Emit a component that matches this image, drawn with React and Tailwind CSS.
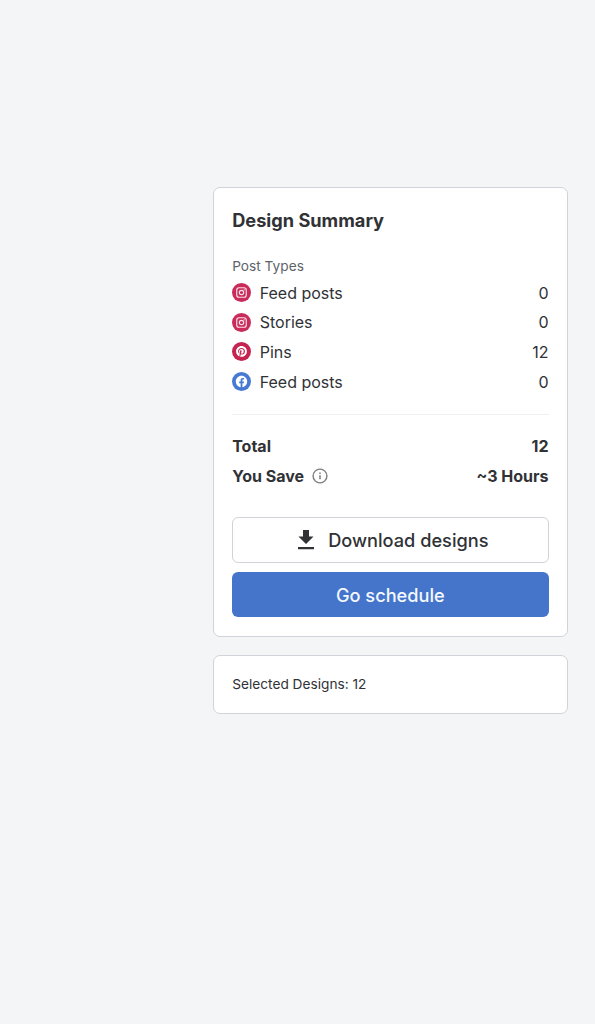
import React from 'react';

function InstagramBadge() {
  return (
    <svg viewBox="0 0 20 20" className="size-[19px] shrink-0">
      <circle cx="10" cy="10" r="10" fill="#c92b5b" />
      <g fill="none" stroke="#fbe4ec" strokeWidth="1.2">
        <rect x="5" y="5" width="10" height="10" rx="2.4" />
        <circle cx="10" cy="10" r="2.3" />
      </g>
      <circle cx="12.8" cy="7.2" r="0.7" fill="#fbe4ec" />
    </svg>
  );
}

function PinterestBadge() {
  return (
    <svg viewBox="0 0 20 20" className="size-[19px] shrink-0">
      <circle cx="10" cy="10" r="10" fill="#c4244f" />
      <g transform="translate(4.3 4.3) scale(0.475)">
        <path
          fill="#fff"
          d="M12 0C5.4 0 0 5.4 0 12c0 5.1 3.2 9.4 7.6 11.2-.1-.9-.2-2.4 0-3.5.2-.9 1.4-6 1.4-6s-.4-.7-.4-1.8c0-1.7 1-2.9 2.2-2.9 1 0 1.5.8 1.5 1.7 0 1-.7 2.6-1 4-.3 1.2.6 2.2 1.8 2.2 2.1 0 3.8-2.2 3.8-5.5 0-2.9-2.1-4.9-5-4.9-3.4 0-5.4 2.6-5.4 5.2 0 1 .4 2.1.9 2.7.1.1.1.2.1.3-.1.4-.3 1.2-.3 1.4-.1.2-.2.3-.4.2-1.5-.7-2.4-2.9-2.4-4.6 0-3.8 2.8-7.3 7.9-7.3 4.2 0 7.4 3 7.4 6.9 0 4.1-2.6 7.5-6.2 7.5-1.2 0-2.4-.6-2.8-1.4l-.7 2.8c-.3 1-1 2.3-1.5 3.1 1.1.3 2.3.5 3.500.5 6.600 0 12-5.400 12-12S18.600 0 12 0z"
        />
      </g>
    </svg>
  );
}

function FacebookBadge() {
  return (
    <svg viewBox="0 0 20 20" className="size-[19px] shrink-0">
      <circle cx="10" cy="10" r="10" fill="#4779d3" />
      <g transform="translate(4 4) scale(0.5)">
        <path
          fill="#fff"
          d="M24 12.073c0-6.627-5.373-12-12-12s-12 5.373-12 12c0 5.990 4.388 10.954 10.125 11.854v-8.385H7.078v-3.470h3.047V9.430c0-3.007 1.792-4.669 4.533-4.669 1.312 0 2.686.235 2.686.235v2.953H15.830c-1.491 0-1.956.925-1.956 1.874v2.250h3.328l-.532 3.470h-2.796v8.385C19.612 23.027 24 18.062 24 12.073z"
        />
      </g>
    </svg>
  );
}

const posts = [
  { label: 'Feed posts', count: 0, Icon: InstagramBadge },
  { label: 'Stories', count: 0, Icon: InstagramBadge },
  { label: 'Pins', count: 12, Icon: PinterestBadge },
  { label: 'Feed posts', count: 0, Icon: FacebookBadge },
];

export default function App() {
  return (
    <main className="min-h-screen bg-[#f4f5f7] pt-[187px] pl-[213px] font-['Inter',sans-serif] text-[#303236]">
      <section className="h-[450px] w-[355px] rounded-[7px] border border-[#d0d3d9] bg-white pt-[18px] pr-[18.5px] pl-[18.2px]">
        <h2 className="text-[18.2px] leading-7 font-bold">Design Summary</h2>
        <h3 className="mt-[22px] text-[13.7px] leading-5 text-[#606369]">Post Types</h3>
        <ul className="mt-[2px]">
          {posts.map(({ label, count, Icon }, i) => (
            <li key={i} className="flex h-[29.6px] items-center text-[16px]">
              <Icon />
              <span className="ml-[8.5px]">{label}</span>
              <span className="ml-auto">{count}</span>
            </li>
          ))}
        </ul>
        <hr className="mt-[17.2px] border-[#f0f1f2]" />
        <dl className="mt-[16px] text-[16px] font-bold">
          <div className="flex h-[30px] items-center justify-between">
            <dt>Total</dt>
            <dd>12</dd>
          </div>
          <div className="flex h-[30px] items-center justify-between">
            <dt className="flex items-center gap-[7.5px]">
              You Save
              <svg viewBox="0 0 16 16" className="size-4" fill="none" stroke="#7a7c80">
                <circle cx="8" cy="8" r="6.9" strokeWidth="1.4" />
                <path d="M8 7.200v4M8 4.500v1.400" strokeWidth="1.5" />
              </svg>
            </dt>
            <dd>~3 Hours</dd>
          </div>
        </dl>
        <button className="mt-[26.4px] flex h-[46px] w-full items-center justify-center gap-[14px] rounded-[6px] border border-[#d0d3d9] bg-white pt-[1px] pl-[6px] text-[18.2px] font-medium">
          <svg viewBox="0 0 16 20" className="h-5 w-4" fill="#303236">
            <path d="M5 0h6v6.500h4.500L8 14 .5 6.500H5zM0 17h16v2.200H0z" />
          </svg>
          <span className="pt-[1px]">Download designs</span>
        </button>
        <button className="mt-[9px] h-[45px] w-full rounded-[6px] bg-[#4475ca] pt-[3px] text-[18.2px] font-medium text-[#f5f8ff]">
          Go schedule
        </button>
      </section>
      <section className="mt-[18px] flex h-[59px] w-[355px] items-center rounded-[7px] border border-[#d0d3d9] bg-white px-[18.2px] pb-[1px] text-[13.7px]">
        Selected Designs: 12
      </section>
    </main>
  );
}
